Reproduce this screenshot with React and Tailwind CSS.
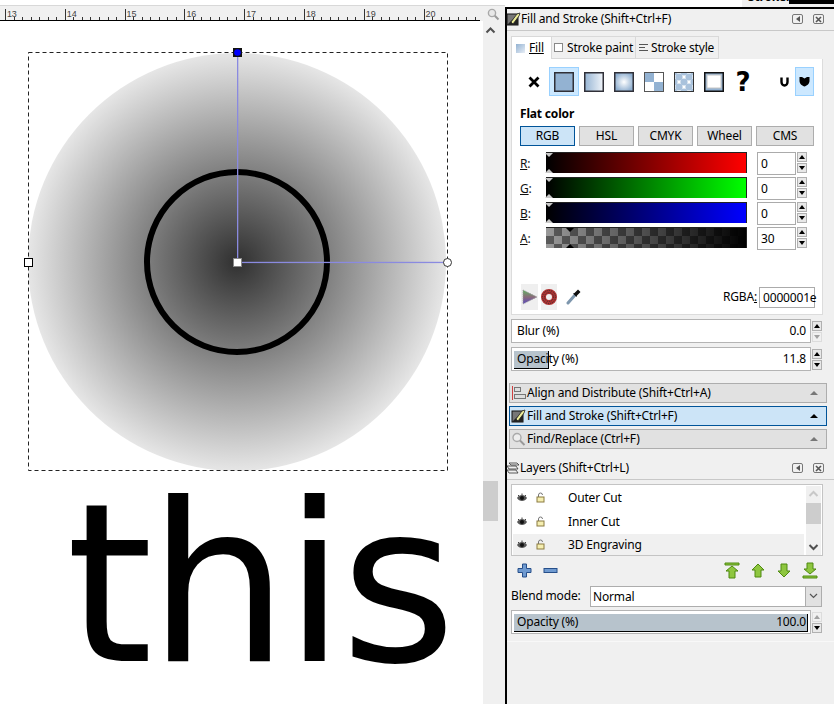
import React from "react";

const ticks = [];
for (let i = 0; i < 58; i++) ticks.push(5 + (i * 59.8) / 7 - 0);

function Ruler() {
  const labels = [13, 14, 15, 16, 17, 18, 19, 20];
  return (
    <div className="h-[16px] bg-[#f0f0f0] border-t border-[#d8d8d8] flex">
      <div className="w-[480px] shrink-0 relative border-b border-black overflow-hidden">
        <svg width="480" height="15" className="block">
          {ticks.map((x, i) => (
            <line key={i} x1={Math.round(x) + 0.5} x2={Math.round(x) + 0.5} y1={i % 7 === 0 ? 3 : 11} y2="15" stroke="#333" strokeWidth="1" />
          ))}
          {labels.map((l, i) => (
            <text key={l} x={7 + i * 59.8} y="11" fontSize="9" fontFamily="'Liberation Sans',sans-serif" fill="#444">{l}</text>
          ))}
          <line x1="0" x2="5" y1="14.5" y2="14.5" stroke="#000" />
        </svg>
      </div>
      <div className="flex-1 flex items-start justify-center pt-[1px]">
        <svg width="14" height="14" viewBox="0 0 14 14">
          <circle cx="6" cy="6" r="3.6" fill="#e8e8e8" stroke="#a8a8a8" strokeWidth="1.4" />
          <line x1="8.8" y1="8.8" x2="12.5" y2="12.5" stroke="#9a9a9a" strokeWidth="2" />
        </svg>
      </div>
    </div>
  );
}

function Canvas() {
  return (
    <div className="relative w-[483px] h-[683px] bg-white overflow-hidden">
      <svg width="483" height="683" className="absolute left-0 top-0">
        <defs>
          <radialGradient id="rg">
            <stop offset="0" stopColor="#303030" />
            <stop offset="1" stopColor="#e6e6e6" />
          </radialGradient>
        </defs>
        <g transform="translate(0,-21)">
          <circle cx="237" cy="262" r="209" fill="url(#rg)" />
          <circle cx="237" cy="262" r="90" fill="none" stroke="#000" strokeWidth="6" />
          <rect x="28.5" y="52.5" width="419" height="418" fill="none" stroke="#222" strokeDasharray="4 3" />
          <rect x="237" y="52" width="1.3" height="210" fill="#8a8ae0" />
          <rect x="237" y="261.8" width="210" height="1.3" fill="#8a8ae0" />
          <rect x="233" y="48" width="9" height="9" fill="#111" />
          <circle cx="237.5" cy="52.5" r="3.3" fill="#0000ff" />
          <rect x="24.5" y="258.5" width="8" height="8" fill="#fff" stroke="#000" />
          <circle cx="447.5" cy="262.5" r="4" fill="#fff" stroke="#333" />
          <rect x="233.5" y="258.5" width="8" height="8" fill="#fff" stroke="#888" />
        </g>
      </svg>
      <div className="absolute left-[66px] top-[443px] text-[222px] tracking-[-5px] leading-[240px] text-black font-['DejaVu_Sans',sans-serif] whitespace-nowrap">
        this
      </div>
    </div>
  );
}

function Scrollbar() {
  return (
    <div className="w-[15px] h-[683px] bg-[#f0f0f0] flex flex-col items-center">
      <svg width="15" height="15" viewBox="0 0 15 15" className="mt-[2px]">
        <path d="M3.5 9.5 L7.5 5.5 L11.5 9.5" fill="none" stroke="#505050" strokeWidth="2" />
      </svg>
      <div className="w-[15px] h-[40px] mt-[443px] bg-[#cdcdcd]" />
    </div>
  );
}

function Spin({ up = true, down = true }) {
  const Btn = ({ on, dir }) => (
    <div className={`w-[10px] h-[10px] border flex items-center justify-center ${on ? "border-[#b0b0b0] bg-[#e8e8e8]" : "border-[#dcdcdc] bg-[#f0f0f0]"}`}>
      <div className={`w-0 h-0 border-l-[3px] border-r-[3px] border-l-transparent border-r-transparent ${dir === "up" ? "border-b-[4px]" : "border-t-[4px]"} ${on ? "border-b-black border-t-black" : "border-b-[#a0a0a0] border-t-[#a0a0a0]"}`} />
    </div>
  );
  return (
    <div className="flex flex-col gap-[1px] ml-[1px]">
      <Btn on={up} dir="up" />
      <Btn on={down} dir="down" />
    </div>
  );
}

function PaintBtn({ selected, children }) {
  return (
    <div className={`w-[30px] h-[29px] flex items-center justify-center border ${selected ? "bg-[#cce8ff] border-[#99d1ff]" : "border-transparent"}`}>
      {children}
    </div>
  );
}

function Paint({ children, dark }) {
  return (
    <svg width="20" height="20" viewBox="0 0 20 20">
      {children}
      <rect x="0.75" y="0.75" width="18.5" height="18.5" fill="none" stroke={dark || "#303038"} strokeWidth="1.5" />
    </svg>
  );
}

function PaintRow() {
  return (
    <div className="flex items-start pl-[7px] pt-[8px] h-[38px]">
      <div className="w-[30px] h-[29px] flex items-center justify-center">
        <svg width="12" height="12" viewBox="0 0 12 12"><path d="M1.5 1.5 L10.5 10.5 M10.5 1.5 L1.5 10.5" stroke="#000" strokeWidth="2.8" /></svg>
      </div>
      <PaintBtn selected>
        <Paint><rect width="20" height="20" fill="#93b2d2" /></Paint>
      </PaintBtn>
      <PaintBtn>
        <Paint>
          <defs><linearGradient id="lg1"><stop offset="0" stopColor="#93b2d2" /><stop offset="1" stopColor="#f4f7fb" /></linearGradient></defs>
          <rect width="20" height="20" fill="url(#lg1)" />
        </Paint>
      </PaintBtn>
      <PaintBtn>
        <Paint>
          <defs><radialGradient id="rg1"><stop offset="0" stopColor="#ffffff" /><stop offset="1" stopColor="#8fafd0" /></radialGradient></defs>
          <rect width="20" height="20" fill="url(#rg1)" />
        </Paint>
      </PaintBtn>
      <PaintBtn>
        <svg width="20" height="20" viewBox="0 0 20 20">
          <rect width="20" height="20" fill="#fff" />
          <rect x="0" y="0" width="10" height="10" fill="#93b2d2" />
          <rect x="10" y="10" width="10" height="10" fill="#93b2d2" />
          <rect x="0.5" y="0.5" width="19" height="19" fill="none" stroke="#555" />
        </svg>
      </PaintBtn>
      <PaintBtn>
        <svg width="20" height="20" viewBox="0 0 20 20">
          <rect width="20" height="20" fill="#fff" />
          {[0, 10, 20].map((x) => [0, 10, 20].map((y) => <circle key={x + "-" + y} cx={x} cy={y} r="3.6" fill="#a9c2dc" />))}
          <circle cx="5" cy="5" r="3.6" fill="#a9c2dc" /><circle cx="15" cy="5" r="3.6" fill="#a9c2dc" />
          <circle cx="5" cy="15" r="3.6" fill="#a9c2dc" /><circle cx="15" cy="15" r="3.6" fill="#a9c2dc" />
          <rect x="0.5" y="0.5" width="19" height="19" fill="none" stroke="#333" />
        </svg>
      </PaintBtn>
      <PaintBtn>
        <svg width="20" height="20" viewBox="0 0 20 20">
          <rect width="20" height="20" fill="#93b2d2" />
          <rect x="3" y="3" width="14" height="13" fill="#fff" stroke="#c4c4c4" />
          <rect x="0.75" y="0.75" width="18.5" height="18.5" fill="none" stroke="#111" strokeWidth="1.5" />
        </svg>
      </PaintBtn>
      <div className="w-[30px] h-[29px] flex items-center justify-center -ml-[1px] text-[26px] font-bold leading-none font-['DejaVu_Sans',sans-serif]">?</div>
      <div className="w-[28px] h-[29px] flex items-center justify-center ml-[12px]">
        <svg width="9" height="11" viewBox="0 0 9 11"><path d="M1.5 1.5 L1.5 6 A3 3.5 0 0 0 7.5 6 L7.5 1.5" fill="none" stroke="#000" strokeWidth="2.4" /></svg>
      </div>
      <div className="w-[19px] h-[29px] bg-[#cce8ff] border border-[#99d1ff] flex items-center justify-center -ml-[3px]">
        <svg width="11" height="11" viewBox="0 0 11 11"><path d="M0.5 1 L3 1 L5.5 2.5 L8 1 L10.5 1 L10.5 5 C10.5 8 7.5 10 5.5 10.5 C3.5 10 0.5 8 0.5 5 Z" fill="#000" /></svg>
      </div>
    </div>
  );
}

function ModeBtn({ label, w, selected }) {
  return (
    <div className={`h-[20px] flex items-center justify-center border text-[12px] ${w} ${selected ? "bg-[#cce4f7] border-[#005499]" : "bg-[#e1e1e1] border-[#adadad]"}`}>
      {label}
    </div>
  );
}

function SliderRow({ label, bar, value, alpha }) {
  return (
    <div className="flex items-start h-[21px]">
      <div className="w-[34px] pl-[8px] text-[12px] leading-[23px] text-[#111]">
        <span className="underline">{label}</span>:
      </div>
      <div className={`relative w-[201px] h-[21px] border-t border-r border-[#222] ${bar} ${alpha ? "bg-[length:auto,16px_16px]" : ""}`}>
        {alpha ? (
          <>
            <div className="absolute left-[20px] top-0 w-0 h-0 border-l-[4px] border-r-[4px] border-l-transparent border-r-transparent border-t-[4px] border-t-black" />
            <div className="absolute left-[20px] bottom-0 w-0 h-0 border-l-[4px] border-r-[4px] border-l-transparent border-r-transparent border-b-[4px] border-b-black" />
          </>
        ) : (
          <>
            <div className="absolute -left-[1px] top-0 w-0 h-0 border-l-[4px] border-r-[4px] border-l-transparent border-r-transparent border-t-[4px] border-t-[#c8c8c8]" />
            <div className="absolute -left-[1px] bottom-0 w-0 h-0 border-l-[4px] border-r-[4px] border-l-transparent border-r-transparent border-b-[4px] border-b-[#c8c8c8]" />
          </>
        )}
      </div>
      <div className="ml-[10px] w-[39px] h-[23px] border border-[#ababab] pl-[3px] text-[12px] leading-[21px] bg-white">{value}</div>
      <Spin down={alpha} />
    </div>
  );
}

function SpinField({ label, value, fill, up, down }) {
  return (
    <div className="flex items-center h-[24px] ml-[4px]">
      <div className="relative w-[300px] h-[24px] bg-white border border-[#b4b4b4] text-[12px] leading-[22px] pl-[5px] pr-[4px] flex justify-between">
        {fill ? <div className={`absolute left-[2px] top-[3px] bottom-[1px] bg-[#b7c3cc] border-r border-b border-black ${fill}`} /> : null}
        <span className="relative">{label}</span>
        <span className="relative">{value}</span>
      </div>
      <Spin up={up} down={down} />
    </div>
  );
}

function FillIcon({ className = "" }) {
  return (
    <svg width="15" height="14" viewBox="0 0 15 14" className={`shrink-0 ${className}`}>
      <rect x="1" y="2" width="11" height="11" fill="#777" stroke="#111" />
      <path d="M1 13 L12 2 L12 13 Z" fill="#222" />
      <path d="M5 10 L11 2 L14 1 L13 4 L7 12 Z" fill="#eeee99" stroke="#222" strokeWidth="0.8" />
    </svg>
  );
}

function TitleButtons() {
  return (
    <div className="flex gap-[10px] ml-auto mr-[10px]">
      <div className="w-[11px] h-[10px] border border-[#777] rounded-[2px] flex items-center justify-center">
        <div className="w-0 h-0 border-t-[3px] border-b-[3px] border-r-[4px] border-t-transparent border-b-transparent border-r-[#555]" />
      </div>
      <div className="w-[11px] h-[10px] border border-[#777] rounded-[2px] flex items-center justify-center">
        <svg width="7" height="7" viewBox="0 0 7 7"><path d="M1 1 L6 6 M6 1 L1 6" stroke="#555" strokeWidth="1.6" /></svg>
      </div>
    </div>
  );
}

function Dock({ icon, label, active }) {
  return (
    <div className={`ml-[2px] w-[318px] h-[20px] flex items-center border pl-[1px] text-[12px] gap-[1px] ${active ? "bg-[#cce4f7] border-[#005499]" : "bg-[#e1e1e1] border-[#adadad]"}`}>
      {icon}
      <span>{label}</span>
      <div className={`ml-auto mr-[8px] w-0 h-0 border-l-[4px] border-r-[4px] border-l-transparent border-r-transparent border-b-[4px] ${active ? "border-b-black" : "border-b-[#777]"}`} />
    </div>
  );
}

function LayerRow({ name, active, h }) {
  return (
    <div className={`${h} flex items-center w-[291px] ${active ? "bg-[#f0f0f0]" : ""}`}>
      <svg width="12" height="10" viewBox="0 0 12 10" className="ml-[3px]">
        <path d="M1 5 C3 1 9 1 11 5 C9 9 3 9 1 5 Z" fill="#555" />
        <circle cx="6" cy="5" r="2" fill="#111" />
        <path d="M2 2 L3 3 M6 0.5 V2 M10 2 L9 3" stroke="#444" />
      </svg>
      <svg width="9" height="11" viewBox="0 0 9 11" className="ml-[8px]">
        <path d="M2.5 5 V3 A2 2 0 0 1 6.5 3" fill="none" stroke="#777" />
        <rect x="1" y="5" width="7" height="5" fill="#f5eeb0" stroke="#8a7a40" />
      </svg>
      <span className="ml-[23px] text-[12px]">{name}</span>
    </div>
  );
}

function Green({ d }) {
  return (
    <svg width="16" height="17" viewBox="0 0 16 17">
      <path d={d} fill="#8ec63f" stroke="#4f8a10" strokeWidth="1" strokeLinejoin="round" />
    </svg>
  );
}

export default function App() {
  return (
    <div className="w-[834px] h-[704px] bg-[#f0f0f0] flex overflow-hidden text-black tracking-[-0.17px] font-['Noto_Sans',sans-serif]">
      <div className="w-[505px] shrink-0 flex flex-col">
        <div className="h-[5px] bg-white" />
        <Ruler />
        <div className="flex">
          <Canvas />
          <Scrollbar />
        </div>
      </div>

      <div className="w-[329px] shrink-0 flex flex-col">
        <div className="h-[7px] flex bg-white overflow-hidden">
          <div className="ml-[237px] flex-1 bg-[#f0f0f0] flex">
            <span className="ml-[6px] -mt-[10px] text-[12px] font-bold leading-[14px]">Stroke:</span>
            <div className="ml-auto w-[47px] h-[4px] bg-black" />
          </div>
        </div>
        <div className="flex-1 border-t-2 border-l-2 border-black flex flex-col">
          <div className="h-[22px] mx-0 border-b border-[#c8c8c8] flex items-center text-[12px] pb-[1px]">
            <FillIcon className="-ml-[1px]" />
            <span>Fill and Stroke (Shift+Ctrl+F)</span>
            <TitleButtons />
          </div>

          <div className="ml-[4px] w-[312px] mt-[5px]">
            <div className="flex h-[23px] text-[12px] whitespace-nowrap">
              <div className="w-[41px] bg-white border border-b-0 border-[#d9d9d9] flex items-center pl-[4px] gap-[4px]">
                <div className="w-[9px] h-[9px] bg-[linear-gradient(135deg,#93b2d2,#e8eef6)]" />
                <span className="underline decoration-1">Fill</span>
              </div>
              <div className="w-[84px] border border-l-0 border-[#d9d9d9] flex items-center pl-[2px] gap-[4px]">
                <div className="w-[9px] h-[9px] border border-[#888] bg-white" />
                <span>Stroke paint</span>
              </div>
              <div className="w-[83px] border border-l-0 border-[#d9d9d9] flex items-center pl-[3px] gap-[3px]">
                <svg width="9" height="9" viewBox="0 0 9 9"><path d="M0 1.5 H9 M0 4.5 H6 M0 7.5 H9" stroke="#555" /></svg>
                <span>Stroke style</span>
              </div>
            </div>
            <div className="h-[256px] bg-white border border-t-0 border-[#dcdcdc] flex flex-col">
              <PaintRow />
              <div className="pl-[8px] mt-[10px] h-[14px] text-[12px] leading-[14px] font-bold">Flat color</div>
              <div className="flex ml-[8px] mt-[5px] gap-[4px]">
                <ModeBtn label="RGB" w="w-[55px]" selected />
                <ModeBtn label="HSL" w="w-[55px]" />
                <ModeBtn label="CMYK" w="w-[55px]" />
                <ModeBtn label="Wheel" w="w-[55px]" />
                <ModeBtn label="CMS" w="w-[58px]" />
              </div>
              <div className="flex flex-col gap-[4px] mt-[6px]">
                <SliderRow label="R" value="0" bar="bg-[linear-gradient(to_right,#000,#ff0000)]" />
                <SliderRow label="G" value="0" bar="bg-[linear-gradient(to_right,#000,#00ff00)]" />
                <SliderRow label="B" value="0" bar="bg-[linear-gradient(to_right,#000,#0000ff)]" />
                <SliderRow label="A" value="30" alpha bar="bg-[image:linear-gradient(to_right,transparent,#000),repeating-conic-gradient(#5a5a5a_0_25%,#999_0_50%)]" />
              </div>
              <div className="mt-auto mb-[4px] h-[26px] flex items-center pl-[9px]">
                <div className="w-[17px] h-[26px] bg-[#efefef] flex items-center justify-center">
                  <svg width="16" height="16" viewBox="0 0 16 16">
                    <defs><linearGradient id="tri" x1="0" y1="0" x2="0" y2="1"><stop offset="0" stopColor="#5fb35f" /><stop offset="0.5" stopColor="#8a6a7a" /><stop offset="1" stopColor="#5a4ac0" /></linearGradient></defs>
                    <path d="M1 1 L15 8 L1 15 Z" fill="url(#tri)" />
                    <path d="M1 1 L15 8 L1 15 Z" fill="none" stroke="#999" strokeDasharray="1 1" />
                  </svg>
                </div>
                <div className="w-[16px] h-[26px] bg-[#efefef] ml-[3px] flex items-center justify-center">
                  <svg width="16" height="16" viewBox="0 0 16 16">
                    <circle cx="8" cy="8" r="5.5" fill="none" stroke="#b03030" strokeWidth="5" />
                    <circle cx="8" cy="8" r="4.5" fill="none" stroke="#333" strokeWidth="1" strokeDasharray="1 1" />
                    <circle cx="8" cy="8" r="6.5" fill="none" stroke="#333" strokeWidth="1" strokeDasharray="1 1" />
                  </svg>
                </div>
                <div className="ml-[9px]">
                  <svg width="16" height="18" viewBox="0 0 16 18">
                    <path d="M2 15 L9 7" stroke="#7d96ad" strokeWidth="3" strokeLinecap="round" />
                    <path d="M8.5 5 L12 1.5 L14.5 4 L11 7.5 L10.5 9 L7 5.5 Z" fill="#111" />
                  </svg>
                </div>
                <span className="ml-auto text-[12px]">RGBA<span className="underline">:</span></span>
                <div className="ml-[2px] mr-[7px] w-[56px] h-[21px] border border-[#ababab] text-[12px] leading-[19px] pl-[3px] bg-white">0000001e</div>
              </div>
            </div>
          </div>

          <div className="mt-[4px]">
            <SpinField label="Blur (%)" value="0.0" up down={false} />
          </div>
          <div className="mt-[4px]">
            <SpinField label="Opacity (%)" value="11.8" fill="w-[35px]" up down />
          </div>

          <div className="mt-[12px] flex flex-col gap-[3px]">
            <Dock label="Align and Distribute (Shift+Ctrl+A)" icon={
              <svg width="15" height="14" viewBox="0 0 15 14" className="shrink-0">
                <line x1="1.5" y1="0" x2="1.5" y2="14" stroke="#d04040" />
                <rect x="3.5" y="1.5" width="6" height="4" fill="#ddd" stroke="#777" />
                <rect x="3.5" y="8.5" width="11" height="4" fill="#ddd" stroke="#777" />
              </svg>
            } />
            <Dock active label="Fill and Stroke (Shift+Ctrl+F)" icon={<FillIcon />} />
            <Dock label="Find/Replace (Ctrl+F)" icon={
              <svg width="15" height="14" viewBox="0 0 15 14" className="shrink-0">
                <circle cx="6" cy="5.5" r="4" fill="#eee" stroke="#aaa" strokeWidth="1.4" />
                <line x1="9" y1="8.5" x2="13.5" y2="13" stroke="#999" strokeWidth="2" />
              </svg>
            } />
          </div>

          <div className="mt-[8px] h-[23px] border-b border-[#c8c8c8] flex items-center text-[12px]">
            <svg width="13" height="12" viewBox="0 0 13 12" className="shrink-0 -ml-[1px]">
              <path d="M3 1 H11 L13 3 H5 Z M1 4 H10 L12 7 H3 Z M1 8 H10 L12 11 H3 Z" fill="#eee" stroke="#333" strokeWidth="0.8" />
            </svg>
            <span className="ml-[1px]">Layers (Shift+Ctrl+L)</span>
            <TitleButtons />
          </div>

          <div className="ml-[4px] mt-[4px] w-[312px] h-[72px] bg-white border border-[#c4c4c4] px-[1px] pt-[1px] flex">
            <div className="flex flex-col">
              <LayerRow name="Outer Cut" h="h-[23px]" />
              <LayerRow name="Inner Cut" h="h-[25px]" />
              <LayerRow name="3D Engraving" h="h-[21px]" active />
            </div>
            <div className="ml-[2px] w-[15px] flex flex-col items-center bg-[#f0f0f0]">
              <svg width="15" height="17" viewBox="0 0 15 17"><path d="M3.5 10 L7.5 6 L11.5 10" fill="none" stroke="#c8c8c8" strokeWidth="2" /></svg>
              <div className="w-[15px] h-[21px] bg-[#cdcdcd]" />
              <svg width="15" height="17" viewBox="0 0 15 17" className="mt-auto"><path d="M3.5 7 L7.5 11 L11.5 7" fill="none" stroke="#505050" strokeWidth="2" /></svg>
            </div>
          </div>

          <div className="h-[29px] flex items-center pl-[10px] pr-[16px]">
            <svg width="15" height="15" viewBox="0 0 15 15">
              <path d="M5.5 1 H9.5 V5.5 H14 V9.5 H9.5 V14 H5.5 V9.5 H1 V5.5 H5.5 Z" fill="#6f9ad0" stroke="#264f8a" />
            </svg>
            <svg width="15" height="15" viewBox="0 0 15 15" className="ml-[11px]">
              <rect x="1" y="5.5" width="13" height="4" fill="#6f9ad0" stroke="#264f8a" />
            </svg>
            <div className="ml-auto flex gap-[10px]">
              <Green d="M1 1 H15 V3 H1 Z M8 4 L14 9 H11 V16 H5 V9 H2 Z" />
              <Green d="M8 2 L14 8 H11 V15 H5 V8 H2 Z" />
              <Green d="M5 2 H11 V9 H14 L8 15 L2 9 H5 Z" />
              <Green d="M5 1 H11 V7 H14 L8 12 L2 7 H5 Z M1 14 H15 V16 H1 Z" />
            </div>
          </div>

          <div className="h-[20px] flex items-center mt-[1px] text-[12px]">
            <span className="ml-[4px] w-[79px]">Blend mode:</span>
            <div className="w-[232px] h-[21px] border border-[#adadad] bg-white flex">
              <span className="pl-[2px] leading-[19px]">Normal</span>
              <div className="ml-auto w-[16px] bg-[#e1e1e1] border-l border-[#adadad] flex items-center justify-center">
                <svg width="9" height="6" viewBox="0 0 9 6"><path d="M1 1 L4.5 4.5 L8 1" fill="none" stroke="#555" strokeWidth="1.2" /></svg>
              </div>
            </div>
          </div>

          <div className="mt-[4px]">
            <SpinField label="Opacity (%)" value="100.0" fill="w-[294px]" up={false} down />
          </div>

          <div className="mt-[7px] border-t border-[#f8f8f8]" />
        </div>
      </div>
    </div>
  );
}
